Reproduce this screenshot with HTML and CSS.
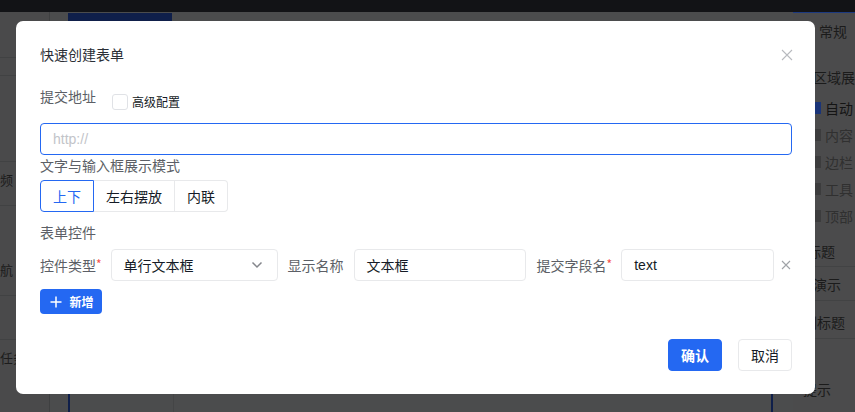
FILE: index.html
```html
<!DOCTYPE html>
<html lang="zh">
<head>
<meta charset="utf-8">
<link rel="stylesheet" href="styles.css">
</head>
<body>
<div class="app">
  <div class="topbar"></div>
  <div class="main">
    <div class="left">
      <div class="l-item l1">C</div>
      <div class="l-item l2"></div>
      <div class="l-item l3"></div>
      <div class="l-item l4">频</div>
      <div class="l-item l5">航</div>
      <div class="l-item l6"></div>
      <div class="l-item l7">任务</div>
    </div>
    <div class="canvas">
      <div class="sel-block"></div>
      <div class="canvas-col"></div>
      <div class="canvas-div"></div>
    </div>
    <div class="right">
      <div class="r-tab">常规</div>
      <div class="r-h">区域展示</div>
      <div class="r-chk on first"><span class="bx"></span>自动</div>
      <div class="r-chk"><span class="bx"></span>内容</div>
      <div class="r-chk"><span class="bx"></span>边栏</div>
      <div class="r-chk"><span class="bx"></span>工具</div>
      <div class="r-chk"><span class="bx"></span>顶部</div>
      <div class="r-h r-h2">标题</div>
      <div class="r-row">演示</div>
      <div class="r-h r-h3">副标题</div>
      <div class="r-h r-h4">提示</div>
    </div>
  </div>
  <div class="modal">
    <div class="m-head">
      <span class="m-title">快速创建表单</span>
      <svg class="m-close" width="12" height="12" viewBox="0 0 12 12"><path d="M1 1L11 11M11 1L1 11" stroke="#b8babf" stroke-width="1.1"/></svg>
    </div>
    <div class="m-body">
      <div class="row-label">
        <span class="lbl">提交地址</span>
        <label class="chk"><span class="box"></span>高级配置</label>
      </div>
      <div class="url-input">http://</div>
      <div class="lbl sec">文字与输入框展示模式</div>
      <div class="radio-group">
        <span class="rb active">上下</span><span class="rb">左右摆放</span><span class="rb">内联</span>
      </div>
      <div class="lbl sec2">表单控件</div>
      <div class="ctl-row">
        <span class="lbl">控件类型<i>*</i></span>
        <div class="select">单行文本框
          <svg width="12" height="8" viewBox="0 0 12 8"><path d="M1.5 1.5L6 6L10.5 1.5" fill="none" stroke="#84868c" stroke-width="1.5"/></svg>
        </div>
        <span class="lbl">显示名称</span>
        <div class="inp w1">文本框</div>
        <span class="lbl">提交字段名<i>*</i></span>
        <div class="inp w2">text</div>
        <svg class="row-x" width="10" height="10" viewBox="0 0 10 10"><path d="M1 1L9 9M9 1L1 9" stroke="#a0a3a8" stroke-width="1.1"/></svg>
      </div>
      <button class="add"><svg width="12" height="12" viewBox="0 0 12 12"><path d="M6 0.5V11.5M0.5 6H11.5" stroke="#fff" stroke-width="1.5"/></svg>新增</button>
    </div>
    <div class="m-foot">
      <button class="btn primary">确认</button>
      <button class="btn">取消</button>
    </div>
  </div>
</div>
</body>
</html>
```
FILE: styles.css
```css
* { box-sizing: border-box; }
html, body { margin: 0; padding: 0; }
body {
  width: 855px; height: 412px; overflow: hidden;
  font-family: "Noto Sans CJK SC", "Noto Sans", sans-serif;
  background: #4b4c4d;
}
.app { position: relative; width: 855px; height: 412px; display: flex; flex-direction: column; }
.topbar { height: 12px; background: #121316; flex: none; }
.main { flex: 1; display: flex; overflow: hidden; }
.left { width: 50px; flex: none; background: #4a4a4b; border-right: 1px solid #3f4041; display: flex; flex-direction: column; color: #1c1c1c; font-size: 13px; }
.l-item { border-bottom: 1px solid #414243; display: flex; align-items: center; white-space: nowrap; flex: none; }
.l1 { height: 46px; padding-left: 34px; font-size: 16px; }
.l2 { height: 18px; }
.l3 { height: 86px; }
.l4 { height: 44px; align-items: flex-start; padding-top: 8px; }
.l5 { height: 90px; align-items: flex-end; padding-bottom: 16px; }
.l6 { height: 44px; }
.l7 { height: 60px; align-items: flex-start; padding-top: 8px; border-bottom: none; }
.canvas { flex: 1; position: relative; background: #4b4c4d; }
.sel-block { position: absolute; left: 18px; top: 1px; width: 104px; height: 10px; background: #0f1f4a; }
.canvas-col { position: absolute; left: 18px; right: 20px; top: 370px; bottom: 0; border-left: 2px solid #0f1f4a; border-right: 2px solid #0f1f4a; }
.canvas-div { position: absolute; left: 123px; top: 370px; bottom: 0; border-left: 1px solid #444546; }
.right { width: 62px; flex: none; background: #4b4b4c; border-top: 1px solid #1d3a80; color: #1b1b1b; font-size: 14px; white-space: nowrap; overflow: hidden; }
.r-tab { margin-top: 8px; padding-left: 26px; height: 24px; }
.r-h { padding-left: 20px; margin-top: 20px; height: 24px; display: flex; align-items: center; }
.r-chk { display: flex; align-items: center; gap: 4px; padding-left: 18px; height: 27px; color: #303030; }
.r-chk.first { margin-top: 5px; }
.r-chk .bx { width: 10px; height: 12px; background: #3c3c3d; flex: none; }
.r-chk.on { color: #141414; }
.r-chk.on .bx { background: #1a3478; }
.r-h2 { margin-top: 6px; padding-left: 14px; border-bottom: 1px solid #424344; height: 32px; }
.r-row { padding-left: 20px; height: 34px; display: flex; align-items: center; border-bottom: 1px solid #424344; }
.r-h3 { margin-top: 4px; padding-left: 10px; border-bottom: 1px solid #424344; height: 34px; }
.r-h4 { margin-top: 38px; padding-left: 10px; }

.modal {
  position: absolute; left: 16px; top: 21px; width: 799px; height: 373px;
  background: #fff; border-radius: 7px;
  display: flex; flex-direction: column;
}
.m-head { height: 66px; display: flex; align-items: center; justify-content: space-between; padding: 0 22px 0 24px; }
.m-title { font-size: 14px; color: #2b2f36; }
.m-close { margin-top: 2px; }
.m-body { padding: 0 23px 0 24px; display: flex; flex-direction: column; }
.lbl { font-size: 14px; color: #5c5f66; white-space: nowrap; }
.lbl i { font-style: normal; color: #f5514c; font-size: 12px; vertical-align: top; }
.row-label { display: flex; align-items: center; height: 22px; }
.row-label .lbl { margin-top: -4px; }
.chk { display: flex; align-items: center; font-size: 12px; color: #151b26; margin-left: 16px; margin-top: 7px; }
.box { width: 16px; height: 16px; border: 1px solid #e0e2e6; border-radius: 3px; margin-right: 4px; }
.url-input {
  margin-top: 14px; height: 32px; border: 1px solid #2468f2; border-radius: 4px;
  font-family: "Liberation Sans", Arial, sans-serif; font-size: 14px; color: #c2c4c9;
  display: flex; align-items: center; padding-left: 12px;
}
.sec { margin-top: 0; line-height: 20px; }
.radio-group { display: flex; margin-top: 5px; height: 32px; }
.rb {
  height: 32px; display: flex; align-items: center; justify-content: center;
  border: 1px solid #e8e9eb; border-left: none; font-size: 14px; color: #151b26;
}
.rb:nth-child(1) { width: 54px; }
.rb:nth-child(2) { width: 81px; }
.rb:nth-child(3) { width: 53px; border-radius: 0 4px 4px 0; }
.rb.active { border: 1px solid #2468f2; color: #2468f2; border-radius: 4px 0 0 4px; }
.sec2 { margin-top: 10px; line-height: 20px; }
.ctl-row { display: flex; align-items: center; margin-top: 7px; height: 32px; }
.select, .inp {
  height: 32px; border: 1px solid #e8e9eb; border-radius: 4px; font-size: 14px; color: #151b26;
  display: flex; align-items: center; padding-left: 12px; flex: none;
}
.select { width: 167px; margin-left: 9px; margin-right: 10px; justify-content: space-between; padding-right: 14px; }
.inp.w1 { width: 172px; margin-left: 10px; margin-right: 11px; }
.inp.w2 { width: 153px; margin-left: 9px; font-family: "Liberation Sans", Arial, sans-serif; }
.row-x { margin-left: 7px; }
.add {
  margin-top: 8px; width: 62px; height: 25px; background: #2468f2; color: #fff; border: none; border-radius: 4px;
  font-family: "Noto Sans CJK SC", sans-serif; font-size: 12px; font-weight: bold;
  display: flex; align-items: center; justify-content: center; gap: 7px; padding: 0 0 0 2px;
}
.m-foot { margin-top: auto; display: flex; justify-content: flex-end; gap: 16px; padding: 0 23px 23px 0; }
.btn {
  width: 54px; height: 32px; border: 1px solid #e8e9eb; border-radius: 4px; background: #fff;
  font-family: "Noto Sans CJK SC", sans-serif; font-size: 14px; color: #151b26; padding: 0;
}
.btn.primary { background: #2468f2; border-color: #2468f2; color: #fff; font-weight: bold; }
```
